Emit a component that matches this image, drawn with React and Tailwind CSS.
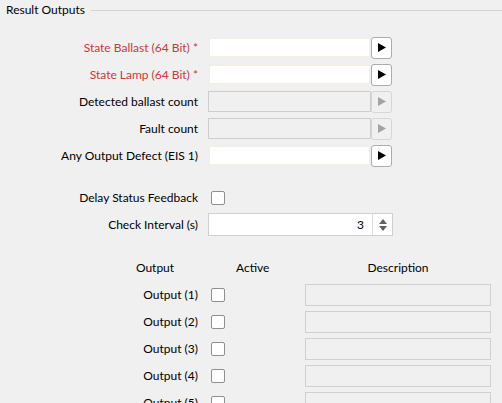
import { useState } from "react";

const fields = [
    { label: "State Ballast (64 Bit) *", required: true },
    { label: "State Lamp (64 Bit) *", required: true },
    { label: "Detected ballast count", disabled: true },
    { label: "Fault count", disabled: true },
    { label: "Any Output Defect (EIS 1)" },
];

const outputs = [1, 2, 3, 4, 5];

function Arrow({ disabled }) {
    return (
        <svg width="8" height="9" viewBox="0 0 8 9">
            <path d="M0 0 L8 4.5 L0 9 Z" fill={disabled ? "#a3a3a3" : "#000"} />
        </svg>
    );
}

function Checkbox({ checked, onChange }) {
    return (
        <button
            type="button"
            onClick={onChange}
            className="w-[14px] h-[14px] rounded-[2px] border border-[#8f8f8f] bg-white flex items-center justify-center"
        >
            {checked && (
                <svg width="10" height="8" viewBox="0 0 10 8">
                    <path d="M1 4 L4 7 L9 1" stroke="#000" strokeWidth="1.4" fill="none" />
                </svg>
            )}
        </button>
    );
}

function ObjectField({ disabled }) {
    return (
        <div className="flex items-center">
            {disabled ? (
                <div className="w-[163px] h-[21px] border border-[#cdcdcd] bg-[#f0f0f0]" />
            ) : (
                <div className="w-[163px] h-[21px] p-px">
                    <input
                        type="text"
                        className="w-full h-full border border-[#f3efda] bg-white outline-none px-1"
                    />
                </div>
            )}
            <button
                type="button"
                disabled={disabled}
                className={`w-[21px] h-[22px] rounded-[3px] border flex items-center justify-center ${
                    disabled ? "border-[#d6d6d6] bg-[#f0f0f0]" : "border-[#acacac] bg-white"
                }`}
            >
                <Arrow disabled={disabled} />
            </button>
        </div>
    );
}

export default function App() {
    const [delay, setDelay] = useState(false);
    const [interval, setInterval] = useState(3);
    const [active, setActive] = useState({});

    return (
        <div className="w-[502px] h-[403px] overflow-hidden bg-[#f0f0f0] text-[12px] text-black font-['Lato','Noto_Sans',sans-serif]">
            <div className="flex items-center h-[20px]">
                <span className="pl-[6px] pr-[6px]">Result Outputs</span>
                <div className="flex-1 h-px bg-[#d4d4d4]" />
            </div>

            <div className="mt-[14px]">
                {fields.map((f) => (
                    <div key={f.label} className="flex items-center h-[27px]">
                        <span
                            className={`w-[199px] pr-[1px] text-right ${
                                f.required ? "text-[#c9383d]" : ""
                            }`}
                        >
                            {f.label}
                        </span>
                        <div className="ml-[9px]">
                            <ObjectField disabled={f.disabled} />
                        </div>
                    </div>
                ))}
            </div>

            <div className="mt-[15px]">
                <div className="flex items-center h-[27px]">
                    <span className="w-[199px] pr-[1px] text-right">Delay Status Feedback</span>
                    <div className="ml-[12px]">
                        <Checkbox checked={delay} onChange={() => setDelay(!delay)} />
                    </div>
                </div>
                <div className="flex items-center h-[27px]">
                    <span className="w-[199px] pr-[1px] text-right">Check Interval (s)</span>
                    <div className="ml-[9px] flex w-[185px] h-[23px] border border-[#cfcfcf] bg-white">
                        <input
                            type="text"
                            value={interval}
                            onChange={(e) => setInterval(e.target.value)}
                            className="flex-1 min-w-0 text-right pr-[8px] outline-none bg-transparent"
                        />
                        <div className="w-[20px] border-l border-[#dcdcdc] flex flex-col items-center justify-center gap-[2px]">
                            <svg width="8" height="5" viewBox="0 0 8 5">
                                <path d="M0 5 L4 0 L8 5 Z" fill="#606060" />
                            </svg>
                            <svg width="8" height="5" viewBox="0 0 8 5">
                                <path d="M0 0 L4 5 L8 0 Z" fill="#606060" />
                            </svg>
                        </div>
                    </div>
                </div>
            </div>

            <div className="mt-[16px]">
                <div className="grid grid-cols-[200px_105px_186px] items-center h-[27px]">
                    <span className="text-center pl-[110px] whitespace-nowrap">Output</span>
                    <span className="pl-[36px]">Active</span>
                    <span className="text-center">Description</span>
                </div>
                {outputs.map((n) => (
                    <div key={n} className="grid grid-cols-[200px_105px_186px] items-center h-[27px]">
                        <span className="text-right pr-[2px]">Output ({n})</span>
                        <div className="pl-[11px]">
                            <Checkbox
                                checked={!!active[n]}
                                onChange={() => setActive({ ...active, [n]: !active[n] })}
                            />
                        </div>
                        <div className="h-[22px] border border-[#d0d0d0] bg-[#f0f0f0]" />
                    </div>
                ))}
            </div>
        </div>
    );
}
